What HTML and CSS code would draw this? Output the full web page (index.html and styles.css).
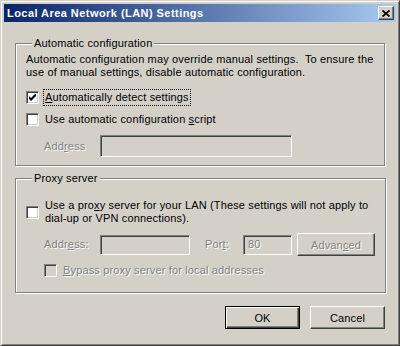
FILE: index.html
```html
<!DOCTYPE html>
<html lang="en">
<head>
    <meta charset="UTF-8">
    <title>Local Area Network (LAN) Settings</title>
    <link rel="stylesheet" href="styles.css">
</head>
<body>
    <div class="window">
        <div class="titlebar">
            <span class="title">Local Area Network (LAN) Settings</span>
            <button class="close-btn" aria-label="Close">
                <svg width="8" height="7" viewBox="0 0 8 7"><path d="M0.5 0.5 L7.5 6.5 M7.5 0.5 L0.5 6.5" stroke="#000" stroke-width="1.7" fill="none"/></svg>
            </button>
        </div>

        <div class="content">
            <fieldset class="group group-auto">
                <legend>Automatic configuration</legend>
                <p class="desc">Automatic configuration may override manual settings.&nbsp; To ensure the use of manual settings, disable automatic configuration.</p>

                <div class="check-row first">
                    <span class="checkbox">
                        <svg width="7" height="7" viewBox="0 0 7 7"><path d="M0 2 L2 4 L7 -1 L7 2 L2 7 L0 5 Z" fill="#000"/></svg>
                    </span>
                    <span class="check-label focused"><u>A</u>utomatically detect settings</span>
                </div>
                <div class="check-row">
                    <span class="checkbox"></span>
                    <span class="check-label">Use automatic configuration <u>s</u>cript</span>
                </div>
                <div class="field-row indent">
                    <span class="label disabled lbl-address">Add<u>r</u>ess</span>
                    <span class="input input-script"></span>
                </div>
            </fieldset>

            <fieldset class="group group-proxy">
                <legend>Proxy server</legend>
                <div class="check-row two-line">
                    <span class="checkbox"></span>
                    <span class="check-label">Use a pro<u>x</u>y server for your LAN (These settings will not apply to dial-up or VPN connections).</span>
                </div>
                <div class="field-row indent proxy-row">
                    <span class="label disabled lbl-address">Addr<u>e</u>ss:</span>
                    <span class="input input-address"></span>
                    <span class="label disabled lbl-port">Por<u>t</u>:</span>
                    <span class="input input-port"><span class="disabled">80</span></span>
                    <button class="btn btn-advanced disabled">Advan<u>c</u>ed</button>
                </div>
                <div class="check-row indent bypass-row">
                    <span class="checkbox grey"></span>
                    <span class="check-label disabled"><u>B</u>ypass proxy server for local addresses</span>
                </div>
            </fieldset>

            <div class="actions">
                <button class="btn btn-default">OK</button>
                <button class="btn">Cancel</button>
            </div>
        </div>
    </div>
</body>
</html>
```

FILE: styles.css
```css
body {
    margin: 0;
    background: #d4d0c8;
    font-family: Tahoma, "Liberation Sans", Arial, sans-serif;
    font-size: 11px;
    line-height: 13px;
    letter-spacing: 0.15px;
    color: #000;
}
.window {
    width: 400px;
    height: 346px;
    box-sizing: border-box;
    background: #d4d0c8;
    border: 1px solid;
    border-color: #d4d0c8 #404040 #404040 #d4d0c8;
    box-shadow: inset 1px 1px 0 #fff, inset -1px -1px 0 #808080;
    padding: 3px;
}
.titlebar {
    height: 18px;
    display: flex;
    align-items: center;
    padding: 0 2px 0 3px;
    background: linear-gradient(to right, #0a246a, #a6caf0);
    color: #fff;
}
.title {
    font-weight: bold;
    font-size: 11px;
    letter-spacing: 0.45px;
}
.close-btn {
    margin-left: auto;
    width: 16px;
    height: 14px;
    padding: 0;
    display: flex;
    align-items: center;
    justify-content: center;
    background: #d4d0c8;
    border: 1px solid;
    border-color: #fff #404040 #404040 #fff;
    box-shadow: inset -1px -1px 0 #808080;
}
.content {
    padding: 15px 11px 0 11px;
}
.group {
    margin: 0;
    padding: 0 10px;
    border: 1px solid #808080;
    box-shadow: inset 1px 1px 0 #fff, 1px 1px 0 #fff;
}
.group legend {
    margin-left: 6px;
    padding: 0 2px;
    background: #d4d0c8;
}
.group-auto {
    padding-top: 3px;
    padding-bottom: 8px;
}
.group-proxy {
    margin-top: 6px;
    padding-top: 12px;
    padding-bottom: 13px;
}
.desc {
    margin: 0;
}
.check-row {
    display: flex;
    align-items: center;
    min-height: 15px;
}
.check-row.first {
    margin-top: 10px;
}
.check-row + .check-row {
    margin-top: 5px;
}
.checkbox {
    flex: none;
    width: 13px;
    height: 13px;
    box-sizing: border-box;
    display: flex;
    align-items: center;
    justify-content: center;
    background: #fff;
    border: 1px solid;
    border-color: #808080 #fff #fff #808080;
    box-shadow: inset 1px 1px 0 #404040, inset -1px -1px 0 #d4d0c8;
}
.checkbox.grey {
    background: #d4d0c8;
}
.check-label {
    margin-left: 4px;
    padding: 1px 1px;
    border: 1px solid transparent;
}
.check-label.focused {
    border: 1px dotted #000;
}
.disabled {
    color: #808080;
    text-shadow: 1px 1px 0 #fff;
}
.indent {
    padding-left: 18px;
}
.field-row {
    display: flex;
    align-items: center;
    margin-top: 7px;
}
.label {
    flex: none;
}
.lbl-address {
    width: 56px;
}
.input {
    box-sizing: border-box;
    height: 22px;
    display: flex;
    align-items: center;
    padding-left: 4px;
    background: #d4d0c8;
    border: 1px solid;
    border-color: #808080 #fff #fff #808080;
    box-shadow: inset 1px 1px 0 #404040, inset -1px -1px 0 #d4d0c8;
}
.input-script {
    width: 192px;
}
.proxy-row {
    margin-top: 6px;
}
.proxy-row .input {
    height: 20px;
}
.input-address {
    width: 90px;
}
.lbl-port {
    margin-left: 15px;
    width: 38px;
}
.input-port {
    width: 49px;
}
.btn {
    font-family: inherit;
    font-size: 11px;
    letter-spacing: inherit;
    color: #000;
    background: #d4d0c8;
    box-sizing: border-box;
    width: 75px;
    height: 23px;
    padding: 0;
    border: 1px solid;
    border-color: #fff #404040 #404040 #fff;
    box-shadow: inset -1px -1px 0 #808080;
}
.btn-advanced {
    margin-left: 5px;
    width: 78px;
    height: 23px;
    color: #808080;
}
.bypass-row {
    margin-top: 6px;
}
.actions {
    display: flex;
    justify-content: flex-end;
    gap: 10px;
    margin-top: 13px;
}
.btn-default {
    border: 1px solid #000;
    box-shadow: inset 1px 1px 0 #fff, inset -1px -1px 0 #404040, inset -2px -2px 0 #808080;
}
```
